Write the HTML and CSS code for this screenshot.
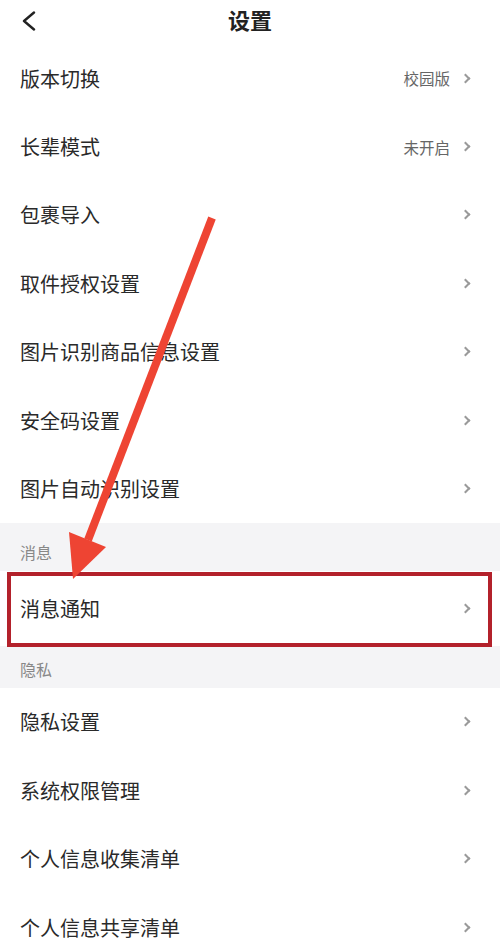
FILE: index.html
```html
<!DOCTYPE html>
<html lang="zh-CN">
<head>
<meta charset="utf-8">
<title>设置</title>
<link rel="stylesheet" href="styles.css">
</head>
<body>
<div class="page">
  <header class="topbar">
    <svg class="back" viewBox="0 0 16 20" width="16" height="20"><path d="M13 1.5 L3 10 L13 18.5" fill="none" stroke="#222" stroke-width="2.4" stroke-linecap="round" stroke-linejoin="round"/></svg>
    <h1 class="title">设置</h1>
  </header>

  <ul class="list">
    <li class="row"><span class="label">版本切换</span><span class="value">校园版</span><i class="chev"></i></li>
    <li class="row"><span class="label">长辈模式</span><span class="value">未开启</span><i class="chev"></i></li>
    <li class="row"><span class="label">包裹导入</span><i class="chev"></i></li>
    <li class="row"><span class="label">取件授权设置</span><i class="chev"></i></li>
    <li class="row"><span class="label">图片识别商品信息设置</span><i class="chev"></i></li>
    <li class="row"><span class="label">安全码设置</span><i class="chev"></i></li>
    <li class="row"><span class="label">图片自动识别设置</span><i class="chev"></i></li>
  </ul>

  <div class="section">消息</div>
  <ul class="list">
    <li class="row row-tall"><span class="label">消息通知</span><i class="chev"></i></li>
  </ul>

  <div class="section section-short">隐私</div>
  <ul class="list">
    <li class="row"><span class="label">隐私设置</span><i class="chev"></i></li>
    <li class="row"><span class="label">系统权限管理</span><i class="chev"></i></li>
    <li class="row"><span class="label">个人信息收集清单</span><i class="chev"></i></li>
    <li class="row"><span class="label">个人信息共享清单</span><i class="chev"></i></li>
  </ul>

  <svg class="annot" viewBox="0 0 500 942" width="500" height="942">
    <rect x="9" y="574" width="481" height="71" fill="none" stroke="#b3212b" stroke-width="4"/>
    <line x1="212" y1="218" x2="88" y2="540" stroke="#ee4433" stroke-width="8"/>
    <polygon points="69,532 106,547 73,579" fill="#ee4433"/>
  </svg>
</div>
</body>
</html>
```

FILE: styles.css
```css
* { box-sizing: border-box; }
html, body { margin: 0; padding: 0; background: #fff; }
body {
  font-family: "Noto Sans CJK SC", "Noto Sans", sans-serif;
  color: #222;
}
.page {
  position: relative;
  width: 500px;
  height: 942px;
  overflow: hidden;
  background: #fff;
}
.topbar {
  position: relative;
  height: 44px;
  display: flex;
  align-items: flex-start;
  justify-content: center;
  padding-top: 5px;
}
.back {
  position: absolute;
  left: 21px;
  top: 11px;
}
.title {
  margin: 0;
  font-size: 22px;
  line-height: 28px;
  font-weight: 700;
  color: #222;
}
.list {
  list-style: none;
  margin: 0;
  padding: 0;
  background: #fff;
}
.row {
  height: 68.4px;
  display: flex;
  align-items: center;
  padding: 0 29px 0 20px;
}
.row-tall {
  height: 75px;
}
.label {
  flex: 1;
  font-size: 20px;
  color: #2a2a2a;
}
.value {
  font-size: 15.5px;
  color: #666;
  margin-right: 12px;
}
.chev {
  width: 7px;
  height: 7px;
  border-top: 2px solid #9a9a9a;
  border-right: 2px solid #9a9a9a;
  transform: rotate(45deg);
  margin-right: 2px;
}
.section {
  height: 48px;
  background: #f4f4f6;
  padding: 19px 0 0 20px;
  font-size: 16px;
  line-height: 20px;
  color: #888;
}
.section-short {
  height: 42px;
  padding-top: 13px;
}
.annot {
  position: absolute;
  left: 0;
  top: 0;
  pointer-events: none;
}
```
